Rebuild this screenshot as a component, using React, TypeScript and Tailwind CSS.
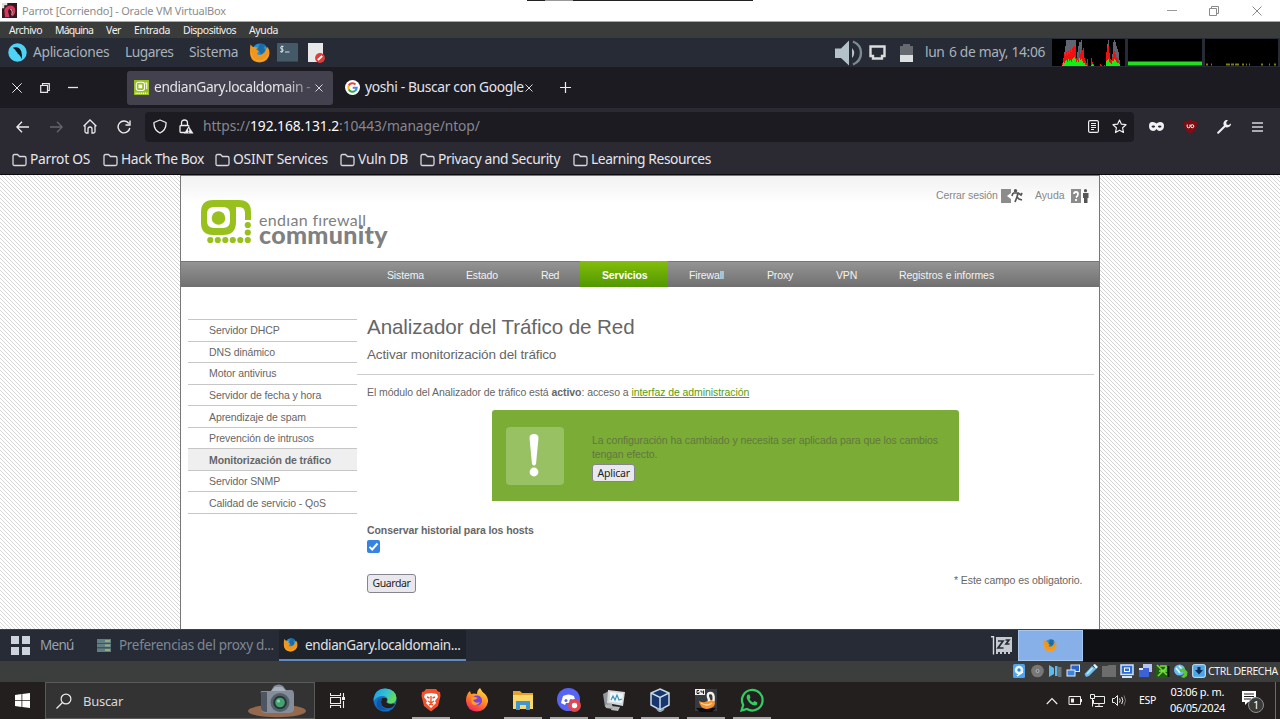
import React from "react";

type Kids = { children?: React.ReactNode };

const T = ({ c, children }: { c: string } & Kids) => (
  <span className={"block shrink-0 whitespace-nowrap " + c}>{children}</span>
);

const Svg = ({ c, vb = "0 0 20 20", children }: { c: string; vb?: string } & Kids) => (
  <svg viewBox={vb} className={"block shrink-0 " + c} fill="none">{children}</svg>
);

const FoxOld = ({ c }: { c: string }) => (
  <Svg c={c}>
    <circle cx="10.5" cy="8.500" r="8" fill="#2490cf" />
    <path d="M10 1q4-1 6 1l-2 3 2 2-4 5-2-3-2-2z" fill="#1b6ba8" />
    <path d="M1 1.500L3.500 4 8 4.500 6.500 6.500 9.500 8 7.500 10.500Q9 13 12 11.500 16 10 16.500 6L18 4Q20 6 20 10.500 19 19 10 19.500 1 19 .5 10 .3 5 1 1.500Z" fill="#f0961e" />
    <path d="M1.500 10q1 8 8.500 8 7-.5 8.500-6" stroke="#f7ab33" strokeWidth="1" />
  </Svg>
);

const Folder = () => (
  <Svg c="w-[15px] h-[14px]" vb="0 0 15 14">
    <path d="M1 3Q1 1.500 2.500 1.500H5.500L7.500 3.500H12.500Q14 3.500 14 5V11Q14 12.500 12.500 12.500H2.500Q1 12.500 1 11Z" stroke="#d8d8de" strokeWidth="1.300" />
  </Svg>
);

const Google = () => (
  <Svg c="w-[15px] h-[15px]">
    <circle cx="10" cy="10" r="10" fill="#fff" />
    <path d="M14 6A5.700 5.700 0 0 0 5 7.300" stroke="#ea4335" strokeWidth="2.600" />
    <path d="M5 7.300A5.700 5.700 0 0 0 5 12.700" stroke="#fbbc05" strokeWidth="2.600" />
    <path d="M5 12.700A5.700 5.700 0 0 0 13.500 14.500" stroke="#34a853" strokeWidth="2.600" />
    <path d="M13.500 14.500A5.700 5.700 0 0 0 15.700 10.200H10.300" stroke="#4285f4" strokeWidth="2.600" />
  </Svg>
);

const Mark = ({ c }: { c: string }) => (
  <Svg c={c} vb="0 0 50 44">
    <path d="M12 0H38Q50 0 50 12V20H44V13Q44 7 38 7H35V22Q35 35 22 35H12Q0 35 0 23V12Q0 0 12 0ZM13 7Q6 7 6 14V21Q6 28 13 28H22Q29 28 29 21V14Q29 7 22 7Z" fill="#98c11d" fillRule="evenodd" />
    <circle cx="17.500" cy="18" r="6.800" fill="#98c11d" />
    <g fill="#98c11d">
      <circle cx="46.800" cy="25" r="3.100" /><circle cx="46.800" cy="32.500" r="3.100" /><circle cx="46.800" cy="40" r="3.100" />
      <circle cx="39.300" cy="40" r="3.100" /><circle cx="31.800" cy="40" r="3.100" /><circle cx="24.300" cy="40" r="3.100" />
      <circle cx="16.800" cy="40" r="3.100" /><circle cx="9.300" cy="40" r="3.100" />
    </g>
  </Svg>
);

function TitleBar() {
  return (
    <div className="relative flex h-[22px] items-center border-b border-[#a8a8a8] bg-white">
      <div className="absolute left-[527px] top-0 h-px w-[226px] bg-[#222]" />
      <div className="absolute left-[545px] top-0 h-px w-[28px] bg-[#999]" />
      <Svg c="ml-[2px] w-[15px] h-[15px]">
        <rect width="20" height="20" fill="#341821" />
        <path d="M5 6Q10 1 16 5 20 11 15 17L12 18Q17 11 13 8 9 6 8 11L10 19H4L3 9Z" fill="#d8375c" />
        <path d="M11 8q4 2 2 8" stroke="#ff94a8" strokeWidth="1.500" />
        <path d="M0 0H7V3H3V7H0Z" fill="#ddd" />
      </Svg>
      <T c="ml-[5px] w-[204px] pt-px text-[11px] tracking-[-0.21px] text-[#8c8c8c]">Parrot [Corriendo] - Oracle VM VirtualBox</T>
      <Svg c="ml-[941px] w-[10px] h-[10px]" vb="0 0 10 10"><path d="M0 4.500H10" stroke="#999" /></Svg>
      <Svg c="ml-[32px] w-[10px] h-[10px]" vb="0 0 10 10"><path d="M.5 2.500H7.500V9.500H.5ZM2.500 2.500V.5H9.500V7.500H7.500" stroke="#8a8a8a" /></Svg>
      <Svg c="ml-[33px] w-[10px] h-[10px]" vb="0 0 10 10"><path d="M.5.5L9.500 9.500M9.500.5L.5 9.500" stroke="#8a8a8a" /></Svg>
    </div>
  );
}

function VmMenu() {
  return (
    <div className="flex h-4 items-center bg-[#3a3b3b] text-[10.500px] leading-[14px] text-[#f2f2f2]">
      <T c="ml-[9px] w-[33px] tracking-[-0.54px]">Archivo</T>
      <T c="ml-[13px] w-[38px] tracking-[-0.78px]">Máquina</T>
      <T c="ml-[13px] w-[15px] tracking-[-0.45px]">Ver</T>
      <T c="ml-[13px] w-[36px] tracking-[-0.35px]">Entrada</T>
      <T c="ml-[13px] w-[53px] tracking-[-0.51px]">Dispositivos</T>
      <T c="ml-[13px] w-[29px] tracking-[-0.38px]">Ayuda</T>
    </div>
  );
}

function Cpu() {
  const gray = [0,0,0,0,0,0,0,0,0,0,0,4,14,20,26,26,26,26,26,26,26,26,26,26,8,14,20,24,24,26,14,6,0,0,0,0,0,0,0,0,0,0,0,0,0,0,0,0,0,0,0,0,0,0,0,22,26,12,4,6,12,24,26,24,20,17,14,6,0,0,0,0,0];
  const red = [0,0,0,0,0,0,0,0,0,0,3,8,12,10,14,11,15,12,16,14,18,19,20,19,8,9,6,18,12,17,16,18,8,5,3,7,0,0,0,8,4,2,0,0,0,0,0,0,2,1,0,0,1,0,14,18,20,13,7,5,9,12,15,12,9,8,5,3,0,0,0,0,0];
  const green = [0,0,0,0,0,0,0,0,0,0,1,4,3,5,6,4,7,5,6,4,7,8,9,7,4,6,4,8,6,7,5,3,3,1,1,0,0,0,0,1,2,1,0,0,0,0,0,0,0,0,0,0,0,0,5,6,7,4,3,2,5,5,7,6,4,3,3,2,0,0,0,0,0];
  const p = (a: number[]) => a.map((v, i) => `M${i + 0.5} 27v-${v}`).join("");
  return (
    <Svg c="w-[73px] h-[27px] bg-black" vb="0 0 73 27">
      <path d={p(gray)} stroke="#5f6470" /><path d={p(red)} stroke="#f01010" /><path d={p(green)} stroke="#12ef12" />
    </Svg>
  );
}

function MatePanel() {
  return (
    <div className="flex h-[29px] items-center bg-[#262b36] text-[13.800px] text-[#a9b1ba]">
      <Svg c="ml-[8px] w-[19px] h-[19px]">
        <circle cx="10" cy="10" r="9.700" fill="#4fd3f5" />
        <path d="M5 5Q12 3 14 9 15 12 14.500 17 12.500 12 10 11 10 9 8.500 9 8.500 7 5 5Z" fill="#121a24" />
      </Svg>
      <T c="ml-[6px] w-[76px] tracking-[-0.33px]">Aplicaciones</T>
      <T c="ml-[16px] w-[48px] tracking-[-0.5px]">Lugares</T>
      <T c="ml-[16px] w-[49px] tracking-[-0.27px]">Sistema</T>
      <FoxOld c="ml-[11px] w-[21px] h-[20px]" />
      <Svg c="ml-[7px] w-[21px] h-[19px]" vb="0 0 21 19">
        <rect width="21" height="19" rx="1" fill="#455a68" /><path d="M0 18.500H21" stroke="#344753" />
        <path d="M6.500 3.500Q3.500 3 3.500 4.500T5 6 6 8 3 8.500M5 2.500V9.500M8 9H12.500" stroke="#e8eef0" strokeWidth=".9" />
      </Svg>
      <Svg c="ml-[10px] w-[17px] h-[20px]" vb="0 0 17 20">
        <path d="M0 0H15V19H0Z" fill="#e8e8e8" /><circle cx="12" cy="15" r="4.900" fill="#e33b36" /><path d="M9.800 17l4.400-4" stroke="#fff" strokeWidth="1.800" />
      </Svg>
      <Svg c="ml-[510px] w-[28px] h-[26px]" vb="0 0 28 26">
        <path d="M0 8.500H6L14 .5V25.500L6 18H0Z" fill="#b3c2c9" />
        <path d="M17 8Q21.500 13 17 18Z" fill="#b3c2c9" /><path d="M18 1.500Q26 5 26 13T18 24.500" stroke="#7b8b94" strokeWidth="2.400" />
      </Svg>
      <Svg c="ml-[6px] w-[17px] h-[16px]" vb="0 0 17 16"><path d="M1.500 1.500H15.500V11H13V13.500H4V11H1.500Z" stroke="#dcdcdc" strokeWidth="2.400" /></Svg>
      <Svg c="ml-[14px] w-[13px] h-[18px]" vb="0 0 13 18"><path d="M3 0H10V2H13V18H0V2H3Z" fill="#666a70" /><path d="M0 11H13V18H0Z" fill="#dedfe0" /></Svg>
      <T c="ml-[12px] w-[19px] tracking-[-0.4px]">lun</T>
      <T c="ml-[5px] w-[97px] tracking-[-0.33px]">6 de may, 14:06</T>
      <div className="ml-[6px] flex gap-[3px]">
        <Cpu />
        <Svg c="w-[74px] h-[27px] bg-black" vb="0 0 74 27"><path d="M0 24.500H74" stroke="#22dd22" strokeWidth="4" /></Svg>
        <Svg c="w-[73px] h-[27px] bg-black" vb="0 0 73 27"><path d="M1 25.500h2m3 0h1m14 0h4m1 0h3m1 0h4m3 0h2m2 0h1m2 0h1m11 0h2m6 0h1m4 0h2" stroke="#7d7d10" strokeWidth="2" /></Svg>
      </div>
    </div>
  );
}

function Tabs() {
  return (
    <div className="flex h-[41px] items-center bg-[#1c1b22] text-[13.800px] text-[#e4e4ea]">
      <Svg c="ml-[12px] w-[10px] h-[10px]" vb="0 0 10 10"><path d="M.3.3L9.700 9.700M9.700.3L.3 9.700" stroke="#e6e6ea" /></Svg>
      <Svg c="ml-[18px] w-[10px] h-[10px]" vb="0 0 10 10"><path d="M.7 2.500H7.500V9.300H.7ZM2.500 2.500V.7H9.300V7.500H7.500" stroke="#e6e6ea" strokeWidth="1.200" /></Svg>
      <Svg c="ml-[18px] w-[10px] h-[10px]" vb="0 0 10 10"><path d="M0 4.500H10" stroke="#e6e6ea" strokeWidth="1.300" /></Svg>
      <div className="ml-[49px] flex h-[34px] w-[206px] items-center rounded-[3px] bg-[#42414d]">
        <Svg c="ml-[7px] w-[15px] h-[15px]">
          <rect width="20" height="20" fill="#98c11d" />
          <path d="M6 3h5q3 0 3 3v5q0 3-3 3H6q-3 0-3-3V6q0-3 3-3zM15 4h2v8" stroke="#fff" strokeWidth="1.400" /><rect x="6" y="6" width="5" height="5" fill="#fff" />
          <path d="M2 17.500H18" stroke="#fff" strokeWidth="2" strokeDasharray="1.500 1" />
        </Svg>
        <div className="ml-[5px] w-[162px] [mask-image:linear-gradient(90deg,#000_130px,transparent_170px)]">
          <T c="w-[160px] tracking-[-0.39px]">endianGary.localdomain -</T>
        </div>
        <Svg c="-ml-px w-[8px] h-[8px]" vb="0 0 8 8"><path d="M.5.5l7 7m0-7l-7 7" stroke="#d6d6dc" /></Svg>
      </div>
      <div className="ml-[12px] flex items-center">
        <Google />
        <T c="ml-[5px] w-[159px] tracking-[-0.34px]">yoshi - Buscar con Google</T>
        <Svg c="ml-px w-[8px] h-[8px]" vb="0 0 8 8"><path d="M.5.5l7 7m0-7l-7 7" stroke="#d6d6dc" /></Svg>
      </div>
      <Svg c="ml-[27px] w-[11px] h-[11px]" vb="0 0 11 11"><path d="M5.500 0V11M0 5.500H11" stroke="#eee" strokeWidth="1.200" /></Svg>
    </div>
  );
}

function NavBar() {
  return (
    <div className="flex h-[37px] items-center bg-[#2b2a33] text-[13.800px] text-[#87878f]">
      <Svg c="ml-[16px] w-[13px] h-[12px]" vb="0 0 13 12"><path d="M13 6H1M6 .8L.9 6 6 11.200" stroke="#eee" strokeWidth="1.300" /></Svg>
      <Svg c="ml-[21px] w-[13px] h-[12px]" vb="0 0 13 12"><path d="M0 6H12M7 .8L12.100 6 7 11.200" stroke="#66656e" strokeWidth="1.300" /></Svg>
      <Svg c="ml-[20px] w-[14px] h-[15px]" vb="0 0 14 15"><path d="M.6 7.200L7 1l6.400 6.200M2 6.500V12.500Q2 14 3.500 14H5V10Q5 8 7 8T9 10V14H10.500Q12 14 12 12.500V6.500" stroke="#e8e8ec" strokeWidth="1.300" /></Svg>
      <Svg c="ml-[20px] w-[14px] h-[14px]" vb="0 0 14 14"><path d="M11.800 3.500A5.900 5.900 0 1 0 12.800 8M13 .5V5H8.500" stroke="#eee" strokeWidth="1.400" /></Svg>
      <div className="ml-[14px] flex h-[30px] w-[989px] items-center rounded bg-[#1c1b22]">
        <Svg c="ml-[8px] w-[14px] h-[15px]" vb="0 0 14 15"><path d="M7 1L13 3.500Q13.500 11 7 14 .5 11 1 3.500Z" stroke="#eee" strokeWidth="1.300" strokeLinejoin="round" /></Svg>
        <Svg c="ml-[12px] w-[15px] h-[15px]" vb="0 0 15 15">
          <path d="M2.500 6V4Q2.500 1 5.500 1T8.500 4V6M6 13.500H2Q1 13.500 1 12.500V7.500Q1 6.500 2 6.500H9Q10 6.500 10 7.500" stroke="#eee" strokeWidth="1.300" />
          <path d="M9.700 7L14.500 14.500H5Z" fill="#eee" /><path d="M9.700 9.500V12M9.700 12.700V13.700" stroke="#1c1b22" />
        </Svg>
        <T c="ml-[9px] w-[277px] tracking-[-0.07px]">https://<span className="text-[#fbfbfe]">192.168.131.2</span>:10443/manage/ntop/</T>
        <Svg c="ml-[608px] w-[11px] h-[13px]" vb="0 0 11 13"><rect x=".6" y=".6" width="9.800" height="11.800" rx="1.500" stroke="#eee" strokeWidth="1.200" /><path d="M3 3.500H8M3 5.500H8M3 7.500H8M3 9.500H6" stroke="#eee" /></Svg>
        <Svg c="ml-[13px] w-[15px] h-[15px]" vb="0 0 15 15"><path d="M7.500 1L9.400 5.200 14 5.700 10.600 8.800 11.500 13.500 7.500 11.200 3.500 13.500 4.400 8.800 1 5.700 5.600 5.200Z" stroke="#eee" strokeWidth="1.200" strokeLinejoin="round" /></Svg>
      </div>
      <Svg c="ml-[15px] w-[15px] h-[9px]" vb="0 0 15 9"><path d="M7.500 1.500Q9 0 11 0 15 0 15 4T11 9Q8.500 9 7.500 7 6.500 9 4 9 0 8.500 0 4T4 0Q6 0 7.500 1.500Z" fill="#f2f2f4" /><ellipse cx="4.300" cy="4.600" rx="1.800" ry="1.100" fill="#2b2a33" /><ellipse cx="10.700" cy="4.600" rx="1.800" ry="1.100" fill="#2b2a33" /></Svg>
      <Svg c="ml-[20px] w-[13px] h-[14px]" vb="0 0 13 14"><path d="M6.500 0L13 2Q13.500 10 6.500 14-.5 10 0 2Z" fill="#800d12" /><path d="M3.200 4.500V6.500Q3.200 7.800 4.600 7.800T6 6.500V4.500" stroke="#fff" /><circle cx="8.300" cy="6.200" r="1.500" stroke="#fff" /></Svg>
      <Svg c="ml-[20px] w-[14px] h-[14px]" vb="0 0 14 14"><path d="M1.200 12.800L8.500 5.500" stroke="#f0f0f2" strokeWidth="2" strokeLinecap="round" /><path d="M11 0A3.800 3.800 0 1 0 14 3.500L11.500 5 9.500 4.500 9.300 2.300Z" fill="#f0f0f2" /></Svg>
      <Svg c="ml-[21px] w-[11px] h-[10px]" vb="0 0 11 10"><path d="M0 1H11M0 5H11M0 9H11" stroke="#d5d5da" strokeWidth="1.300" /></Svg>
    </div>
  );
}

function Bookmarks() {
  return (
    <div className="flex h-[30px] items-center border-b border-[#0c0c0e] bg-[#2b2a33] pl-[12px] text-[13.800px] text-[#e6e6ec]">
      <Folder /><T c="ml-[3px] mr-[13px] w-[60px] tracking-[-0.28px]">Parrot OS</T>
      <Folder /><T c="ml-[3px] mr-[11px] w-[83px] tracking-[-0.37px]">Hack The Box</T>
      <Folder /><T c="ml-[3px] mr-[12px] w-[95px] tracking-[-0.18px]">OSINT Services</T>
      <Folder /><T c="ml-[3px] mr-[12px] w-[50px] tracking-[-0.2px]">Vuln DB</T>
      <Folder /><T c="ml-[3px] mr-[13px] w-[122px] tracking-[-0.38px]">Privacy and Security</T>
      <Folder /><T c="ml-[3px] w-[120px] tracking-[-0.42px]">Learning Resources</T>
    </div>
  );
}

function SideItem({ c, on, children }: { c: string; on?: boolean } & Kids) {
  return (
    <div className={"flex h-[21.560px] items-center border-t border-[#c6c6c6] pl-[21px] pt-[2px] " + (on ? "bg-[#efefef] font-bold" : "")}>
      <T c={c}>{children}</T>
    </div>
  );
}

function Page() {
  return (
    <div className="flex h-[454px] justify-center bg-[repeating-linear-gradient(45deg,#fff_0px,#fff_1.600px,#d2d2d2_2.200px,#d2d2d2_2.400px,#fff_2.828px)] font-['Liberation_Sans',sans-serif] text-[10.500px] tracking-[-0.09px] text-[#666]">
      <div className="flex h-[454px] w-[920px] flex-col border-x border-t border-[#777] bg-white">
        <div className="flex h-[85px] bg-gradient-to-b from-[#f2f2f2] to-white to-[28px]">
          <Mark c="ml-[20px] mt-[24px] w-[50px] h-[44px]" />
          <div className="ml-[8px] mt-[36px] w-[130px] font-['Lato',sans-serif] text-[#808080]">
            <T c="w-[107px] text-[16px] leading-[16px] tracking-[0.32px]">endıan fırewall</T>
            <T c="-mt-[5px] w-[129px] text-[25px] font-black leading-[22px] tracking-[0.32px]">community</T>
          </div>
          <div className="ml-[547px] mt-[12px] flex h-[15px] items-center text-[#888]">
            <T c="w-[62px]">Cerrar sesión</T>
            <Svg c="ml-[3px] w-[22px] h-[14px]" vb="0 0 22 14">
              <path d="M0 0H10V14H0Z" fill="#8c8c8c" /><path d="M10 4V10L6 7Z" fill="#fff" /><circle cx="14.500" cy="1.700" r="1.700" fill="#555" />
              <path d="M12 4L17 4 16 8 18 10 21 11M16 8L14 13M17 4L20 6 21 4M12 4L11 7" stroke="#555" strokeWidth="1.700" />
            </Svg>
            <T c="ml-[12px] w-[30px] tracking-normal">Ayuda</T>
            <Svg c="ml-[6px] w-[18px] h-[14px]" vb="0 0 18 14">
              <path d="M0 0H10V14H0Z" fill="#8c8c8c" /><path d="M3 5Q3 3 5 3T7 5 5 8.500M5 10V12" stroke="#fff" strokeWidth="1.800" />
              <circle cx="14.500" cy="1.700" r="1.600" fill="#555" /><path d="M12 4H17.500V9H16.500V14H13V9H12Z" fill="#555" />
            </Svg>
          </div>
        </div>
        <div className="flex h-[26px] items-center border-t border-[#777] bg-gradient-to-b from-[#949494] to-[#707070] pt-[2px] tracking-[-0.14px] text-[#f2f2f2]">
          <T c="ml-[206px] w-[37px]">Sistema</T>
          <T c="ml-[42px] w-[32px]">Estado</T>
          <T c="ml-[43px] w-[18px] tracking-[-0.4px]">Red</T>
          <div className="-mt-[3px] ml-[21px] flex h-[26px] w-[88px] items-center bg-gradient-to-b from-[#84bd0d] to-[#519800] pl-[22px] pt-[3px] font-bold text-white">
            <T c="w-[45px]">Servicios</T>
          </div>
          <T c="ml-[21px] w-[35px]">Firewall</T>
          <T c="ml-[43px] w-[26px]">Proxy</T>
          <T c="ml-[43px] w-[21px]">VPN</T>
          <T c="ml-[42px] w-[95px] tracking-[-0.06px]">Registros e informes</T>
        </div>
        <div className="flex flex-1">
          <div className="ml-[7px] mt-[32px] w-[169px]">
            <SideItem c="w-[70px]">Servidor DHCP</SideItem>
            <SideItem c="w-[66px]">DNS dinámico</SideItem>
            <SideItem c="w-[67px]">Motor antivirus</SideItem>
            <SideItem c="w-[112px]">Servidor de fecha y hora</SideItem>
            <SideItem c="w-[97px]">Aprendizaje de spam</SideItem>
            <SideItem c="w-[105px]">Prevención de intrusos</SideItem>
            <SideItem c="w-[122px]" on>Monitorización de tráfico</SideItem>
            <SideItem c="w-[71px]">Servidor SNMP</SideItem>
            <SideItem c="w-[117px]">Calidad de servicio - QoS</SideItem>
            <div className="h-px bg-[#c6c6c6]" />
          </div>
          <div className="w-[737px]">
            <T c="ml-[10px] mt-[26px] w-[271px] text-[20.600px] leading-[28px]">Analizador del Tráfico de Red</T>
            <T c="ml-[10px] mt-[5px] w-[189px] text-[13.500px] leading-[18px] tracking-[-0.15px]">Activar monitorización del tráfico</T>
            <div className="mt-[10px] h-px bg-[#cdcdcd]" />
            <div className="ml-[10px] mt-[10px] flex leading-[14px]">
              <T c="w-[382px] tracking-[-0.07px]">El módulo del Analizador de tráfico está <b>activo</b>: acceso a <span className="text-[#5b9b0c] underline">interfaz de administración</span></T>
            </div>
            <div className="ml-[135px] mt-[11px] flex h-[91px] w-[467px] rounded-t-[3px] bg-[#7aac36]">
              <div className="ml-[14px] mt-[17px] flex h-[58px] w-[58px] justify-center rounded-[4px] bg-[#97c163]">
                <Svg c="-ml-[2px] mt-[7px] w-[10px] h-[44px]" vb="0 0 10 44"><path d="M.5 4Q.5 0 5 0T9.500 4L7 30Q5 33 3 30Z" fill="#fff" /><circle cx="5" cy="38" r="4.400" fill="#fff" /></Svg>
              </div>
              <div className="ml-[28px] mt-[23px] leading-[14px] text-[#62773f]">
                <T c="w-[347px]">La configuración ha cambiado y necesita ser aplicada para que los cambios</T>
                <T c="w-[65px]">tengan efecto.</T>
                <button className="mt-[3px] flex h-[18px] w-[43px] items-center justify-center rounded-[3px] border border-[#85858f] bg-[#e9e9ed] font-['Noto_Sans',sans-serif] text-[10.500px] text-[#222]"><T c="w-[32px] tracking-[-0.2px]">Aplicar</T></button>
              </div>
            </div>
            <div className="ml-[10px] mt-[22px] leading-[14px]">
              <T c="w-[167px] font-bold">Conservar historial para los hosts</T>
              <Svg c="mt-[3px] w-[13px] h-[13px]" vb="0 0 13 13"><rect width="13" height="13" rx="2" fill="#3584e4" /><path d="M2.500 6.800L5.200 9.500 10.500 3.500" stroke="#fff" strokeWidth="1.900" /></Svg>
            </div>
            <div className="ml-[10px] mt-[21px] flex items-start">
              <button className="flex h-[19px] w-[49px] items-center justify-center rounded-[3px] border border-[#85858f] bg-[#e9e9ed] font-['Noto_Sans',sans-serif] text-[10.500px] text-[#222]"><T c="w-[38px] tracking-[-0.4px]">Guardar</T></button>
              <T c="ml-[538px] w-[128px] leading-[12px]">* Este campo es obligatorio.</T>
            </div>
          </div>
        </div>
      </div>
    </div>
  );
}

function GuestPanel() {
  return (
    <div className="flex h-[32px] items-center border-t border-[#3a3f49] bg-[#262b36] text-[13.500px] text-[#9aa2ac]">
      <Svg c="ml-[11px] w-[19px] h-[19px]" vb="0 0 19 19"><path d="M0 0H8V8H0ZM11 0H19V8H11ZM0 11H8V19H0ZM11 11H19V19H11Z" fill="#ccd3da" /></Svg>
      <T c="ml-[10px] w-[34px] tracking-[-0.7px]">Menú</T>
      <Svg c="ml-[23px] w-[14px] h-[13px]" vb="0 0 14 13"><path d="M0 0H14V4H0ZM0 4.600H14V8.500H0ZM0 9.200H14V13H0Z" fill="#607f83" /><path d="M8 1H13V3H8ZM8 5.500H13V7.500H8ZM8 10H13V12H8Z" fill="#93ad82" /></Svg>
      <T c="ml-[8px] w-[154px] tracking-[-0.31px] text-[#7f8791]">Preferencias del proxy d...</T>
      <div className="ml-[6px] flex h-[31px] w-[187px] items-center border-b-2 border-[#6288c4] bg-[#1e222a] pt-px text-[#e0e2e6]">
        <FoxOld c="ml-[4px] w-[15px] h-[14px]" />
        <T c="ml-[7px] w-[155px] tracking-[-0.39px]">endianGary.localdomain...</T>
      </div>
      <Svg c="ml-[525px] w-[21px] h-[19px]" vb="0 0 21 19">
        <path d="M0 .7H2.500V18.500" stroke="#d5d9dc" strokeWidth="1.400" /><path d="M5 1H21V16H19V18H17V16H15V18H13V16H11V18H9V16H7V18H5Z" fill="#c4cacf" />
        <path d="M7 5H12L7 12H12.500M14.500 4H18L15 8H18.500" stroke="#262b36" strokeWidth="1.700" />
      </Svg>
      <div className="ml-[6px] flex h-[31px] w-[65px] items-center justify-center border border-[#a5c6ef] bg-[#87b0e8]"><FoxOld c="-ml-px w-[14px] h-[13px]" /></div>
      <div className="h-[32px] flex-1 bg-[#101114]" />
    </div>
  );
}

function VmStatus() {
  const s = "mr-[4px] w-[14px] h-[14px]";
  return (
    <div className="flex h-[21px] items-center bg-[#3c3d3d] pl-[1012px]">
      <div className="flex -translate-y-px">
        <Svg c={s} vb="0 0 14 14"><rect x="1" width="12" height="14" rx="1.500" fill="#4ea5ee" /><circle cx="7" cy="6" r="4.300" fill="#e8f4ff" /><circle cx="7" cy="6" r="1.700" fill="#3387d8" /><path d="M5 12L11 8" stroke="#fff" strokeWidth="1.500" /></Svg>
        <Svg c={s} vb="0 0 14 14"><circle cx="7.500" cy="7" r="6.300" fill="#777" /><circle cx="7.500" cy="7" r="2" fill="#aaa" /><circle cx="7.500" cy="7" r=".8" fill="#444" /></Svg>
        <Svg c={s} vb="0 0 14 14"><path d="M1 1L6 4V10L1 13ZM7 2H9.500V12H7Z" fill="#5cb9ee" /><path d="M10 3H13.500V13H10Z" fill="#6e7579" /></Svg>
        <Svg c={s} vb="0 0 14 14"><rect x="5" y="1" width="8.500" height="6.500" fill="#2a63c9" stroke="#d8e8ff" /><rect x="1" y="6" width="8" height="6" fill="#3b82df" stroke="#e6f0ff" /></Svg>
        <Svg c={s} vb="0 0 14 14"><path d="M2 13L.5 10 8 2 12 5 5 12Z" fill="#69bdf3" /><path d="M9 1L11 0 14 3 12 5Z" fill="#e3f3fc" /><path d="M3 10L8.500 4" stroke="#c8ecff" strokeWidth="1.500" /></Svg>
        <Svg c={s} vb="0 0 14 14"><path d="M0 2H5L7 1H14V13H0Z" fill="#6d6d6d" /></Svg>
        <Svg c={s} vb="0 0 14 14"><rect x="1" y="1" width="12" height="9.500" fill="#2e6cd2" stroke="#cfe4ff" strokeWidth="1.500" /><rect x="4.500" y="4" width="5" height="3.500" stroke="#fff" /><path d="M2 13H12" stroke="#cfe4ff" strokeWidth="2" /></Svg>
        <Svg c={s} vb="0 0 14 14"><rect x="5" y="0" width="9" height="8" fill="#b8c4f0" /><path d="M1 4H11V13H1Z" fill="#3b62d8" /><path d="M1 4H5V6H1Z" fill="#dfe7ff" /></Svg>
        <Svg c={s} vb="0 0 14 14"><path d="M0 1H14V14H0Z" fill="#215d10" /><path d="M1 1L11 11M11 3L2 12M4 2H10V8M3 7H9" stroke="#72dd40" strokeWidth="1.500" /><path d="M12.500 2V13" stroke="#0b1605" strokeWidth="2" /></Svg>
        <Svg c={s} vb="0 0 14 14"><circle cx="5.500" cy="6" r="5.500" fill="#68bdf2" /><path d="M2 4L6 9M5 2L8 5" stroke="#e5f6ff" strokeWidth="1.500" /><path d="M6 5L10 4 13.500 8 13 12 10 14 7 13 10 10 9 8H6Z" fill="#59c72d" /></Svg>
        <Svg c={s} vb="0 0 14 14"><rect x=".7" y=".7" width="12.600" height="12.600" rx="1.500" fill="#4aa6e8" stroke="#d7efff" /><path d="M5.500 3H8.500V6H11L7 10.500 3 6H5.500Z" fill="#112d55" /></Svg>
      </div>
      <T c="-ml-[2px] w-[70px] pt-px text-[10.500px] tracking-[-0.36px] text-[#f2f2f2]">CTRL DERECHA</T>
    </div>
  );
}

function TaskItem({ run, children }: { run?: boolean } & Kids) {
  return (
    <div className="flex h-[37px] w-[45.900px] shrink-0 flex-col items-center justify-between">
      <div className="flex flex-1 items-center pt-px">{children}</div>
      <div className={"h-[2px] w-[38px] " + (run ? "bg-[#a9a8a8]" : "")} />
    </div>
  );
}

function Taskbar() {
  const k = "w-[24px] h-[24px]";
  return (
    <div className="flex h-[37px] items-center bg-[#231f1e] text-white">
      <Svg c="ml-[15px] w-[15px] h-[15px]" vb="0 0 15 15"><path d="M0 2L6.500 1.100V7H0ZM7.300 1L15 0V7H7.300ZM0 7.800H6.500V13.900L0 13ZM7.300 7.800H15V15L7.300 14Z" fill="#fff" /></Svg>
      <div className="ml-[15px] flex h-[37px] w-[270px] items-center border border-[#5a5a5a] bg-[#343333]">
        <Svg c="ml-[10px] w-[16px] h-[16px]" vb="0 0 16 16"><circle cx="10" cy="6" r="4.900" stroke="#eee" strokeWidth="1.200" /><path d="M6.500 9.500L.5 15.500" stroke="#eee" strokeWidth="1.300" /></Svg>
        <T c="ml-[11px] w-[40px] pt-[2px] text-[13px] tracking-[-0.27px] text-[#d8d8d8]">Buscar</T>
        <Svg c="ml-[124px] w-[60px] h-[34px]" vb="0 0 60 34">
          <ellipse cx="30" cy="27" rx="29" ry="6.300" fill="#94694c" />
          <path d="M15 7H24L27 2Q32-1 36 2L39 6H45Q47 7 47 10V26Q46 29 42 29H19Q14 29 14 24V10Q13 7 15 7Z" fill="#848d99" />
          <path d="M14 8H20V28Q14 28 14 24Z" fill="#4d5662" /><path d="M24 7L28 3H35L39 7Z" fill="#a7b0bb" />
          <circle cx="33" cy="18.500" r="9.500" fill="#566069" /><circle cx="33" cy="18.500" r="6.800" fill="#26343a" /><circle cx="33" cy="18.500" r="4.800" fill="#46a071" /><circle cx="31.500" cy="17" r="1.500" fill="#8fd6ab" />
        </Svg>
      </div>
      <Svg c="ml-[15px] w-[15px] h-[15px]" vb="0 0 15 15"><path d="M.5 0V2.500H10.500V0M.5 4.500H10.500V10.500H.5ZM.5 15V12.500H10.500V15M13.500 0V4M13.500 8V15" stroke="#eee" strokeWidth="1.100" /><rect x="12" y="4" width="3" height="3" fill="#eee" /></Svg>
      <div className="ml-[17px] flex">
        <TaskItem>
          <Svg c={k} vb="0 0 24 24">
            <defs><linearGradient id="eg" x1="0" y1="0" x2="1" y2=".4"><stop stopColor="#1b9de2" /><stop offset=".6" stopColor="#35c1d0" /><stop offset="1" stopColor="#66dc55" /></linearGradient></defs>
            <circle cx="12" cy="12" r="11.500" fill="#1470c4" />
            <path d="M.7 11Q2 .5 12 .5 23 1 23.500 10 23 15.500 17.500 15.500 13 15.500 14.500 12.500 15 8.500 10 8 4 8 .7 13Z" fill="url(#eg)" />
            <path d="M9 10Q6 18 13 20 19 21 22 16.500L20 15.500Q17 17 14 15 12.500 14 14 12.500 15 11 13 10Z" fill="#231f1e" />
            <path d="M9 10Q5.500 19 14 21.500 7 24 4 19 2 12 9 10Z" fill="#1255a2" />
          </Svg>
        </TaskItem>
        <TaskItem run>
          <Svg c={k} vb="0 0 24 24"><path d="M7 1H17L19 3.500 21 4 21.500 8 19 18 12 23.500 5 18 2.500 8 3 4 5 3.500Z" fill="#f4502a" /><path d="M6 6L12 5 18 6 19 9 16 13 17 15 12 20 7 15 8 13 5 9Z" fill="#fff" /><path d="M8 9L10.500 10M16 9L13.500 10M12 8V14M9 13L12 15 15 13M10 17L12 16 14 17" stroke="#f4502a" strokeWidth="1.400" /></Svg>
        </TaskItem>
        <TaskItem>
          <Svg c={k} vb="0 0 24 24">
            <defs><linearGradient id="fg" x1=".8" y1="0" x2=".3" y2="1"><stop stopColor="#ffe14a" /><stop offset=".5" stopColor="#ff8a21" /><stop offset="1" stopColor="#f2245c" /></linearGradient></defs>
            <path d="M3 5L5 3 6 6Q9 5 12 6 12 2 15 0 17 4 20 6 23.500 10 23 14 21 23 12 23.500 2 23 1 13 1 8 3 5Z" fill="url(#fg)" />
            <circle cx="12" cy="12.500" r="5" fill="#7542e5" /><path d="M6 10Q9 8 13 10 10 12 8 12 10 16 15 14 12 19 7 16Z" fill="#ff9b27" />
          </Svg>
        </TaskItem>
        <TaskItem run>
          <Svg c={k} vb="0 0 24 24"><path d="M2 3H9L11 5H22V10H2Z" fill="#e3a22b" /><path d="M2 7H22V21H2Z" fill="#fbd668" /><path d="M5 22V13H19V22H15V17H9V22Z" fill="#3f97d2" /></Svg>
        </TaskItem>
        <TaskItem run>
          <Svg c={k} vb="0 0 24 24"><circle cx="11.500" cy="11.500" r="11.500" fill="#5865f2" /><path d="M6 8Q11.500 5 17 8L19 15 15 17 14 15H9L8 17 4 15Z" fill="#fff" /><circle cx="9" cy="12.500" r="1.500" fill="#5865f2" /><circle cx="14" cy="12.500" r="1.500" fill="#5865f2" /><circle cx="17.500" cy="17.500" r="6.500" fill="#e2474d" /><circle cx="17.500" cy="17.500" r="2.700" fill="#fff" /></Svg>
        </TaskItem>
        <TaskItem run>
          <Svg c={k} vb="0 0 24 24"><path d="M1 6L7 3 9 18 3 19Z" fill="#92979b" /><path d="M6 2L23 4 21 18 5 15Z" fill="#d6d9da" /><path d="M8 4L21 5.500 20 15 7.500 13.500Z" fill="#edf6fa" /><path d="M9 12L11 8 13 12 15 7 17 12 20 11" stroke="#3e94bd" strokeWidth="1.200" /><path d="M3 17L10 16 11 21 4 20ZM10 18L18 19 16 23 9 22Z" fill="#b3b7b9" /></Svg>
        </TaskItem>
        <TaskItem run>
          <Svg c={k} vb="0 0 24 24"><path d="M12 1L21 5V17L12 22 3 17V5Z" fill="#17366d" /><path d="M3 5L12 9.500 21 5M12 9.500V22M12 1L21 5V17L12 22 3 17V5Z" stroke="#c7d9e7" strokeWidth="1.500" /><path d="M9 21L12 23.500 16 21" stroke="#8fa7b8" strokeWidth="2" /></Svg>
        </TaskItem>
        <TaskItem run>
          <Svg c={k} vb="0 0 24 24"><rect x="1" y="1" width="22" height="22" fill="#353a40" /><path d="M2 20H22L18 24H6Z" fill="#0d0d0d" /><path d="M5 13Q11 16 14 12H20Q22 15 20 18 17 21 12 21 6 20 5 13Z" fill="#f39332" /><path d="M15.500 13L14 9Q13 4.500 17 5 20.500 5.500 19.500 13" stroke="#f7f4ee" strokeWidth="2.400" /><path d="M7 15Q13 19 18 15" stroke="#ffd49b" strokeWidth="1.500" /><rect x="1" y="1" width="10" height="6" fill="#eee" /><path d="M5 2.500H3V5.500H5V4M7 2.500V4H9.500M9.500 2.500V6" stroke="#222" /></Svg>
        </TaskItem>
        <TaskItem run>
          <Svg c={k} vb="0 0 24 24"><path d="M1.500 22.500L3.200 17A10.300 10.300 0 1 1 7 21Z" stroke="#31cf62" strokeWidth="2.200" /><path d="M8 6.500Q6 8 7 11 10 17 15 17.500 17.500 17 17.500 14.500L14.500 13 13 14.500Q10.500 13.500 9.500 11L10.500 9.500 9.500 6.500Z" fill="#31cf62" /></Svg>
        </TaskItem>
      </div>
      <Svg c="ml-[271px] w-[12px] h-[8px]" vb="0 0 12 8"><path d="M.8 7L6 1.500 11.200 7" stroke="#eee" strokeWidth="1.200" /></Svg>
      <Svg c="ml-[10px] w-[14px] h-[9px]" vb="0 0 14 9"><path d="M1 .5H12.500V8.500H1ZM13.500 3V6" stroke="#eee" /><path d="M3 2.500H6V6.500H3Z" fill="#eee" /></Svg>
      <Svg c="ml-[8px] w-[15px] h-[13px]" vb="0 0 15 13"><path d="M4.500 2.500H14.500V9.500H3.500V6M9 9.500V12M5 12.500H13M.5.5H4.500V4.500H.5ZM2.500 4.500V12.500" stroke="#eee" /></Svg>
      <Svg c="ml-[7px] w-[15px] h-[13px]" vb="0 0 15 13"><path d="M.5 4.500H2.500L5.500 1.500V11.500L2.500 8.500H.5Z" stroke="#eee" /><path d="M7.500 4.500Q9 6.500 7.500 8.500M9.700 3Q12 6.500 9.700 10" stroke="#eee" /><path d="M12 1.500Q15 6.500 12 11.500" stroke="#777" /></Svg>
      <T c="ml-[12px] w-[17px] text-[10.500px] tracking-[-0.3px]">ESP</T>
      <div className="-mt-px ml-[14px] flex w-[55px] flex-col items-center text-[11px] leading-[16px]">
        <T c="w-[54px] tracking-[-0.28px]">03:06 p. m.</T>
        <T c="w-[55px] tracking-[-0.35px]">06/05/2024</T>
      </div>
      <Svg c="ml-[16px] w-[24px] h-[24px]" vb="0 0 24 24">
        <path d="M1 2H15V13H7L4 16V13H1Z" fill="#fff" /><path d="M3 5H13M3 7.500H13M3 10H10" stroke="#231f1e" /><circle cx="15" cy="16" r="7.500" fill="#3a3838" stroke="#8f8f8f" />
        <text x="12" y="20" fill="#fff" fontSize="11" fontFamily="Noto Sans">1</text>
      </Svg>
      <div className="ml-[10px] h-[37px] w-px bg-[#6a6a6a]" />
    </div>
  );
}

export default function App() {
  return (
    <div className="h-[719px] w-[1280px] overflow-hidden bg-black font-['Noto_Sans',sans-serif]">
      <TitleBar /><VmMenu /><MatePanel /><Tabs /><NavBar /><Bookmarks /><Page /><GuestPanel /><VmStatus /><Taskbar />
    </div>
  );
}
